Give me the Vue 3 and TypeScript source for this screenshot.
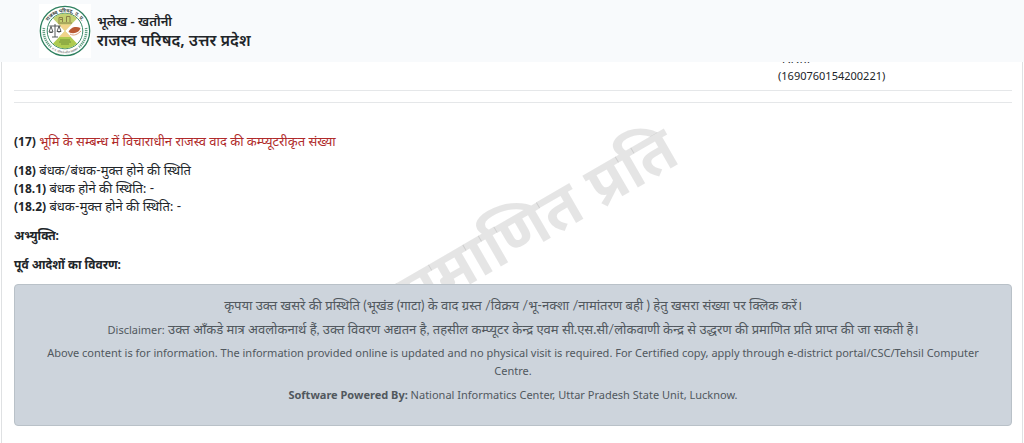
<script setup lang="ts">
interface StatusLine {
  no: string
  text: string
}

const mortgageLines: StatusLine[] = [
  { no: '(18)', text: 'बंधक/बंधक-मुक्त होने की स्थिति' },
  { no: '(18.1)', text: 'बंधक होने की स्थिति: -' },
  { no: '(18.2)', text: 'बंधक-मुक्त होने की स्थिति: -' },
]
</script>

<template>
  <div class="page">
    <header class="bar">
      <svg class="logo" viewBox="0 0 52 54" role="img" aria-label="राजस्व परिषद">
        <defs>
          <path id="arc-top" d="M6.2 31 A20 20 0 1 1 45.8 31" />
          <path id="arc-bottom" d="M6 37 A22.3 22.3 0 0 0 46 37" />
        </defs>
        <rect width="52" height="54" fill="#fff" />
        <circle cx="26" cy="27" r="24.7" fill="#fff" stroke="#2f8060" stroke-width="1.3" />
        <circle cx="26" cy="27" r="17.8" fill="#fff" stroke="#3a8a68" stroke-width="1" />
        <path d="M26 27 L14 14.4 A17.4 17.4 0 0 1 38 14.4 Z" fill="#c3d172" />
        <path d="M26 27 L14 39.6 A17.4 17.4 0 0 0 38 39.6 Z" fill="#aecb50" />
        <path d="M26 27 L19.8 20.5 H32.2 Z M26 27 L20.2 33 H31.8 Z" fill="#f1d38a" />
        <path d="M20 18 V13.5 H23.5 V18 M27.5 18 V12.5 H31 V18 M19 19 H33 M21 15.5 H23" fill="none" stroke="#8c8049" stroke-width="1" />
        <path d="M21 36 H31 M20 38 H32 M22 40 H30" stroke="#6e8b35" stroke-width=".9" />
        <path d="M29.5 28 C31 24 36 21.5 41.5 24 C40.5 28 35 31 29.5 28 Z" fill="#b95a35" />
        <path d="M31 30 C35 32.5 39 30 42 27" fill="none" stroke="#dba080" stroke-width="1" />
        <path d="M16 20 V33 M13 33 H19 M10.5 22 H21.5 M12 22.5 L10 28 H14 Z M20 22 L18 27.5 H22 Z" fill="none" stroke="#444b49" stroke-width="0.9" />
        <path d="M10 28 Q12 30 14 28 Z M18 27.5 Q20 29.5 22 27.5 Z" fill="#444b49" />
        <text class="seal-top"><textPath href="#arc-top" startOffset="50%" text-anchor="middle">राजस्व परिषद्, उ. प्र.</textPath></text>
        <text class="seal-bottom"><textPath href="#arc-bottom" startOffset="50%" text-anchor="middle">रा.प. परिवर्तनशील प्रशासन</textPath></text>
        <path d="M5 24 A21.2 21.2 0 0 0 12 43 M47 24 A21.2 21.2 0 0 1 40 43" fill="none" stroke="#64a184" stroke-width="2.6" stroke-dasharray="1.2 .8" />
      </svg>
      <div class="titles">
        <h2>भूलेख - खतौनी</h2>
        <h1>राजस्व परिषद, उत्तर प्रदेश</h1>
      </div>
    </header>

    <main class="sheet">
      <div class="watermark" aria-hidden="true">अप्रमाणित प्रति</div>

      <div class="record">
        <p class="hi">वरासत</p>
        <p>(1690760154200221)</p>
      </div>
      <div class="spacer-row"></div>

      <p class="line hi"><b>(17)</b> <span class="red">भूमि के सम्बन्ध में विचाराधीन राजस्व वाद की कम्प्यूटरीकृत संख्या</span></p>
      <div class="line">
        <p v-for="l in mortgageLines" :key="l.no" class="hi"><b>{{ l.no }}</b> {{ l.text }}</p>
      </div>
      <p class="line hi"><b>अभ्युक्ति:</b></p>
      <p class="line hi"><b>पूर्व आदेशों का विवरण:</b></p>

      <footer class="notice">
        <p class="hi">कृपया उक्त खसरे की प्रस्थिति (भूखंड (गाटा) के वाद ग्रस्त /विक्रय /भू-नक्शा /नामांतरण बही ) हेतु खसरा संख्या पर क्लिक करें।</p>
        <p class="hi"><span class="latin">Disclaimer:</span> उक्त आँकडे मात्र अवलोकनार्थ हैं, उक्त विवरण अद्यतन है, तहसील कम्प्यूटर केन्द्र एवम सी.एस.सी/लोकवाणी केन्द्र से उद्धरण की प्रमाणित प्रति प्राप्त की जा सकती है।</p>
        <p>Above content is for information. The information provided online is updated and no physical visit is required. For Certified copy, apply through e-district portal/CSC/Tehsil Computer Centre.</p>
        <p><strong>Software Powered By:</strong> National Informatics Center, Uttar Pradesh State Unit, Lucknow.</p>
      </footer>
    </main>
  </div>
</template>

<style>
body {
  margin: 0;
  background: #fff;
}
</style>

<style scoped>
.page {
  display: flex;
  flex-direction: column;
  min-height: 100vh;
  font-family: "Noto Sans", "Open Sans", sans-serif;
  font-size: 11px;
  line-height: 18px;
  color: #212529;
}
.bar {
  position: relative;
  z-index: 2;
  box-sizing: border-box;
  height: 62px;
  padding: 0 39px;
  display: flex;
  align-items: center;
  gap: 6px;
  background: #f8fafc;
}
.logo {
  width: 52px;
  height: 54px;
}
.seal-top {
  font-size: 5px;
  font-weight: 700;
  fill: #3d4a45;
}
.seal-bottom {
  font-size: 3px;
  fill: #555;
}
.titles h1,
.titles h2 {
  margin: 0;
  font-weight: 600;
}
.titles h2 {
  font-size: 13px;
  line-height: 18px;
}
.titles h1 {
  font-size: 16px;
  line-height: 20px;
}
.sheet {
  position: relative;
  flex: 1;
  margin: -13px 1px 0;
  padding: 0 10px 16px 12px;
  border: 1px solid #dfe1e3;
  border-width: 0 1px;
  overflow: hidden;
}
p {
  margin: 0;
}
.hi {
  font-family: Lato, "Noto Sans", sans-serif;
  font-size: 13px;
}
.hi b,
.latin {
  font-family: "Noto Sans", "Open Sans", sans-serif;
  font-size: 12px;
  line-height: 12px;
}
.hi .latin {
  font-size: 11px;
}
.record {
  padding: 0 0 5px 764px;
  border-bottom: 1px solid #e5e7e9;
}
.spacer-row {
  height: 11px;
  margin-bottom: 29px;
  border-bottom: 1px solid #e5e7e9;
}
.line {
  margin-bottom: 11px;
}
.red {
  color: #b02a2a;
}
.watermark {
  position: absolute;
  right: 36.7%;
  top: 54px;
  font-size: 61px;
  line-height: 90px;
  font-weight: 700;
  color: rgba(0, 0, 0, 0.1);
  white-space: nowrap;
  transform: rotate(-30deg);
  transform-origin: 100% 0;
}
.record,
.spacer-row,
.line,
.notice {
  position: relative;
}
.notice {
  padding: 11px 20px 15px;
  border: 1px solid #b9c1c8;
  border-radius: 4px;
  background: #cdd4dc;
  color: #51585e;
  text-align: center;
}
.notice p {
  margin-bottom: 6px;
}
</style>
